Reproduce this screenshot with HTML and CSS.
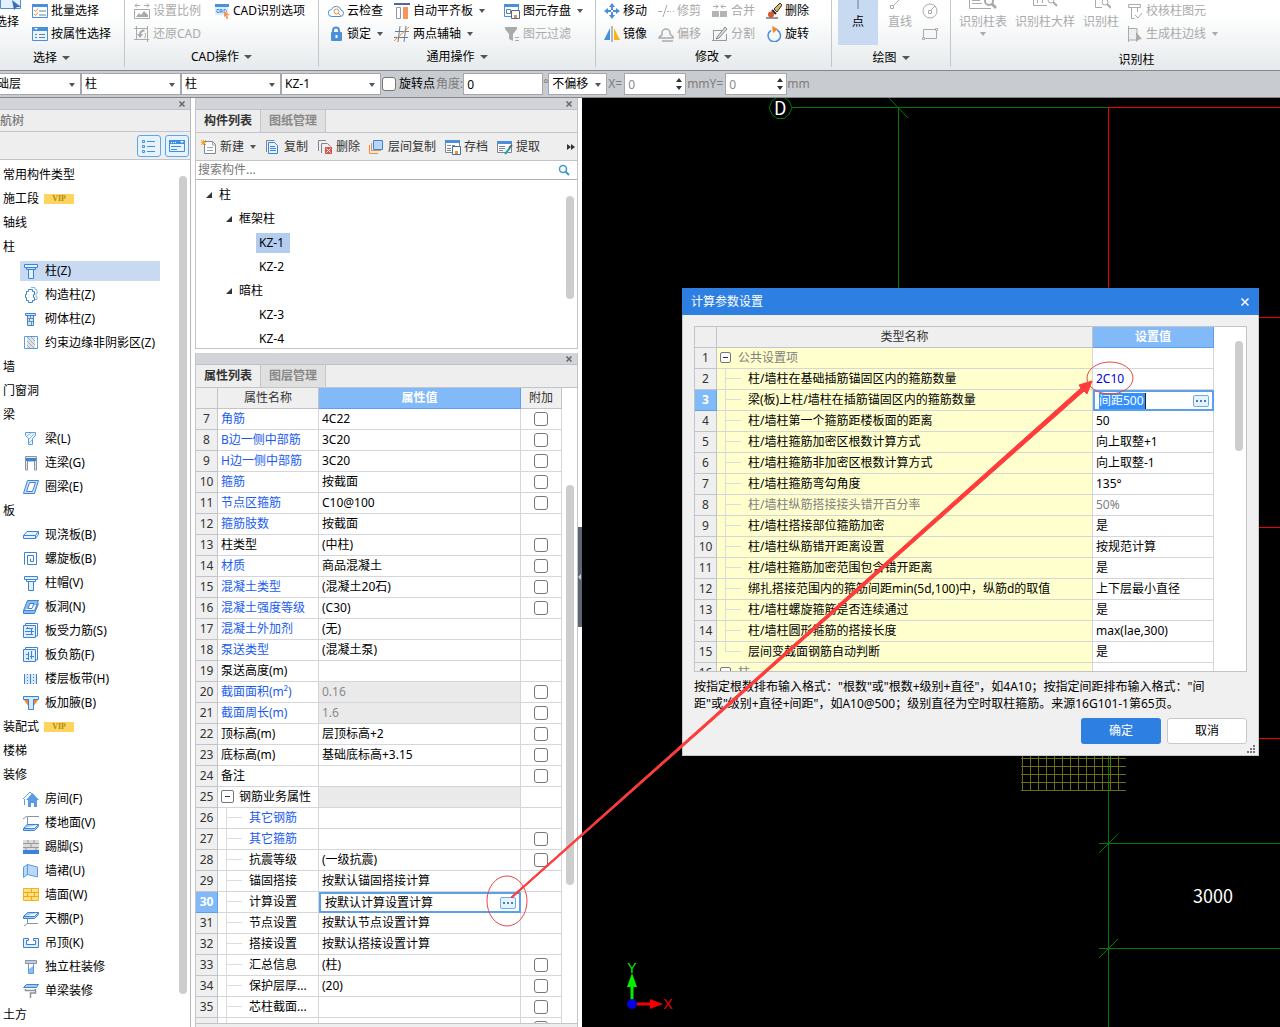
FILE: index.html
```html
<!DOCTYPE html>
<html lang="zh-CN">
<head>
<meta charset="utf-8">
<title>计算参数设置</title>
<link rel="stylesheet" href="styles.css">
</head>
<body>
<svg class="defs" width="0" height="0" aria-hidden="true">
  <defs>
    <symbol id="i-batch" viewBox="0 0 16 16"><path d="M.5 1.500h15v13H.5z" fill="#fff" stroke="#4a8fdc"/><path d="M0 1h16v3H0z" fill="#4a8fdc"/><path d="M2 7l1.500 1.500L6 5.500M2 11l1.500 1.500L6 9.500" fill="none" stroke="#f08a3c"/><path d="M7 8h7M7 12h7" stroke="#667f93"/></symbol>
    <symbol id="i-prop" viewBox="0 0 16 16"><path d="M.5 1.500h15v13H.5z" fill="#eaf4ff" stroke="#4a8fdc"/><path d="M0 1h16v4H0z" fill="#4a8fdc"/><path d="M2 2h4L4 4z" fill="#fff"/><path d="M3 8.500h2m2 0h6M3 11.500h2m2 0h6" stroke="#667f93"/></symbol>
    <symbol id="i-scale" viewBox="0 0 16 16"><path d="M1 2.500h5M10 2.500h5M3 .5l-2 2 2 2M13 .5l2 2-2 2" fill="none" stroke="#aaa"/><path d="M.5 6.500h15v9H.5z" fill="none" stroke="#aaa"/><path d="M2 14l3-4 2 2 3-4 4 4v2z" fill="#aaa"/></symbol>
    <symbol id="i-restore" viewBox="0 0 16 16"><path d="M2.500 0v13.500H15M0 2.500h13.500V16M0 13.500h3M13.500 0v3" fill="none" stroke="#aaa"/><path d="M10.500 4.500C7 4.500 6 7 6 9" fill="none" stroke="#aaa" stroke-width="2"/><path d="M3 8h6l-3 4z" fill="#aaa"/><path d="M10 12c2-1 2-3 1-5" fill="none" stroke="#aaa"/></symbol>
    <symbol id="i-cad" viewBox="0 0 16 16"><path d="M1 3h13v9H1z" fill="#dcecff"/><path d="M1 1h14v3H1z" fill="#4a8fdc"/><path d="M5 6.500H3v3h2M6 10V6.500h2V10M6 8.500h2M10 6.500h1.500l1 1v1l-1 1H10z" fill="none" stroke="#4a8fdc"/><path d="M10 8l6 4-3 .5 1.500 3-2 .5-1-3-1.500 1z" fill="#f5945f"/></symbol>
    <symbol id="i-cloud" viewBox="0 0 16 16"><path d="M4 13.500a3.500 3.500 0 0 1-.5-7A5 5 0 0 1 13 7a3.300 3.300 0 0 1-.5 6.500z" fill="#fff" stroke="#4a8fdc"/><circle cx="8.500" cy="8.500" r="2.500" fill="none" stroke="#f08a3c"/><path d="M10 10l3 3" stroke="#f08a3c"/></symbol>
    <symbol id="i-lock" viewBox="0 0 16 16"><path d="M5 7V4.500a3 3 0 0 1 6 0V7" fill="none" stroke="#4a8fdc" stroke-width="2"/><rect x="3" y="6" width="11" height="9" rx="1" fill="#4a8fdc"/><path d="M8.500 9v3" stroke="#fff" stroke-width="2"/></symbol>
    <symbol id="i-align" viewBox="0 0 16 16"><path d="M0 1h16" stroke="#4a6a9c" stroke-width="2"/><path d="M2.500 4.500h4v11h-4z" fill="#fff" stroke="#8b98a6"/><path d="M9 4h5v12H9z" fill="#f5945f"/></symbol>
    <symbol id="i-axis" viewBox="0 0 16 16"><path d="M6 0L4 16M12 0l-2 16M1 5.500h14M0 11.500h14" stroke="#667f93"/><path d="M0 15L15 1" stroke="#f08a3c"/></symbol>
    <symbol id="i-save" viewBox="0 0 16 16"><path d="M.5 1.500h14v12H.5z" fill="#fff" stroke="#4a8fdc"/><path d="M0 1h15v3H0z" fill="#4a8fdc"/><path d="M2.500 6.500h4v4h-4z" fill="none" stroke="#667f93"/><path d="M7.500 7.500h8v8h-8z" fill="#fff" stroke="#4a6a9c"/><path d="M10 12h3v3h-3z" fill="#f08a3c"/></symbol>
    <symbol id="i-filter" viewBox="0 0 16 16"><path d="M1 1h12v2L9 8v7l-4-2V8L1 3z" fill="#aaa"/><path d="M11 11.500h4M11 14.500h4" stroke="#aaa"/></symbol>
    <symbol id="i-move" viewBox="0 0 16 16"><path d="M8 0l3 4H9v3H7V4H5zM8 16l-3-4h2V9h2v3h2zM0 8l4-3v2h3v2H4v2zM16 8l-4 3V9H9V7h3V5z" fill="#4a8fdc"/></symbol>
    <symbol id="i-mirror" viewBox="0 0 16 16"><path d="M6 2v12H0z" fill="#4a8fdc"/><path d="M10 2v12h6z" fill="#f8b418"/><path d="M8 0v16" stroke="#777"/></symbol>
    <symbol id="i-trim" viewBox="0 0 16 16"><path d="M0 8.500h4M5 14L9 2M9 8.500h2m1 0h1m2 0h1" stroke="#aaa"/></symbol>
    <symbol id="i-offset" viewBox="0 0 16 16"><path d="M1 12c0-3 4-1 3-5a4 4 0 0 1 8 0c0 4 4 2 3 5zM4 15h11" fill="none" stroke="#aaa" stroke-width="1.500"/></symbol>
    <symbol id="i-merge" viewBox="0 0 16 16"><path d="M0 8h7v6H0zM8 8h7v6H8z" fill="#b4b4b4"/><path d="M1 3.500h5M4 1.500l2 2-2 2M14 3.500H9M11 1.500l-2 2 2 2" fill="none" stroke="#aaa"/></symbol>
    <symbol id="i-split" viewBox="0 0 16 16"><path d="M1 4.500h9M1.500 4v10.500h13V8M0 14.500h3" fill="none" stroke="#999"/><path d="M4 13l3-1 8-9-2-2-7 9z" fill="#ddd" stroke="#888"/></symbol>
    <symbol id="i-erase" viewBox="0 0 16 16"><path d="M8 6l6-6 2 2-5 7z" fill="#e0b868" stroke="#333"/><path d="M6 7l4 4" stroke="#222" stroke-width="2"/><circle cx="5" cy="11.500" r="3" fill="#d8582c"/><path d="M0 15h12" stroke="#333"/></symbol>
    <symbol id="i-rotate" viewBox="0 0 16 16"><path d="M11 4a6.200 6.200 0 1 1-6 .3" fill="none" stroke="#4a8fdc" stroke-width="1.500"/><path d="M6 0l6 3-5 4z" fill="#f5842c"/></symbol>
    <symbol id="i-circle" viewBox="0 0 16 16"><circle cx="8" cy="8" r="7" fill="none" stroke="#aaa"/><path d="M6.500 7.500h3v3h-3zM9 7l4-4" fill="none" stroke="#aaa"/></symbol>
    <symbol id="i-rect" viewBox="0 0 16 16"><path d="M1.500 3.500h13v9h-13z" fill="none" stroke="#aaa"/><path d="M.5 11.500h2v2h-2zM13.500 2.500h2v2h-2z" fill="#fff" stroke="#aaa"/></symbol>
    <symbol id="i-check" viewBox="0 0 16 16"><path d="M1.500 1.500h12v3h-12zM4.500 4.500v11h3M10.500 4.500V9M8 12l3 3 4-5" fill="none" stroke="#aaa"/></symbol>
    <symbol id="i-edge" viewBox="0 0 16 16"><path d="M1.500 0v16M1 2.500h9V14H1" fill="#eee" stroke="#aaa"/><path d="M9 6l6 7-3 .5L9 16z" fill="#aaa"/></symbol>

    <symbol id="i-col" viewBox="0 0 16 16"><path d="M1.500 1.500h13v3h-13zM3.500 4.500h9M5.500 6.500h5v9h-5z" fill="#e4f0ff" stroke="#3a83d6"/><path d="M3.500 4v2.500h9V4" fill="none" stroke="#3a83d6"/></symbol>
    <symbol id="i-gz" viewBox="0 0 16 16"><path d="M8 .5h4v2h2v4h-1v3h1v3h-2" fill="none" stroke="#8ab8ee"/><path d="M5.500 2.500h4v2h2v3h-1v3h1v3h-2v2h-4v-2h-2v-3h-1v-3h1v-3h2z" fill="#fff" stroke="#3a83d6"/></symbol>
    <symbol id="i-qt" viewBox="0 0 16 16"><path d="M2.500 2.500h10v2h-10zM4.500 4.500h6v10h-6z" fill="#d4e6fb" stroke="#3a83d6"/><path d="M5 7.500h5M5 10.500h5M7.500 5v2M6.500 8v2M8.500 11v3" stroke="#6e8cab"/></symbol>
    <symbol id="i-ys" viewBox="0 0 16 16"><path d="M1.500 1.500h13v12h-13z" fill="#fff" stroke="#5a9be2"/><path d="M4 2h8v11H4z" fill="#dde1e4"/><path d="M4 2l8 8M4 6l7 7M8 2l4 4M4 10l3 3" stroke="#a5adb4"/></symbol>
    <symbol id="i-beam" viewBox="0 0 16 16"><path d="M2.500 1.500h10v3l-3 3v6h-4v-6l-3-3z" fill="#eef5ff" stroke="#5a9be2"/><path d="M4 5l4-3M6 8l5-5M6 12l3-3" stroke="#8ab8ee"/></symbol>
    <symbol id="i-lbeam" viewBox="0 0 16 16"><path d="M2.500 15V1.500h11V15h-2V6h-7v9z" fill="#e4e8ec" stroke="#8894a0"/><path d="M3 3h10v3H3z" fill="#3a83d6"/></symbol>
    <symbol id="i-ring" viewBox="0 0 16 16"><path d="M4.500 1.500h11l-4 13H.5z" fill="#cfe3fb" stroke="#3a83d6"/><path d="M6.500 3.500h6l-3 9h-6z" fill="#fff" stroke="#3a83d6"/></symbol>
    <symbol id="i-slab" viewBox="0 0 16 16"><path d="M4 4.500h11.500l-3 4H.5zM.5 8.500v3h12v-3M12.500 11.500l3-4v-3" fill="#e4f0ff" stroke="#3a83d6"/></symbol>
    <symbol id="i-spiral" viewBox="0 0 16 16"><path d="M1.500 13.500V1.500h12v12H4.500v-9h6v6h-3v-3" fill="none" stroke="#3a83d6"/></symbol>
    <symbol id="i-hole" viewBox="0 0 16 16"><path d="M4.500 1.500h11l-4 10H.5zM.5 11.500v3h11l4-10" fill="#8ebcf2" stroke="#3a83d6"/><path d="M7 4.500h4l-2 5H5z" fill="#fff" stroke="#3a83d6"/></symbol>
    <symbol id="i-rebar" viewBox="0 0 16 16"><path d="M2.500 2V.5h12V13H13" fill="none" stroke="#3a83d6"/><path d="M.5 2.500h12v12H.5z" fill="#e0edfc" stroke="#3a83d6"/><path d="M3 5.500h7M3 11.500h7M4.500 4v2M8.500 6v6M2 8.500h9" stroke="#3a83d6"/></symbol>
    <symbol id="i-rebar2" viewBox="0 0 16 16"><path d="M2.500 2V.5h12V13H13" fill="none" stroke="#3a83d6"/><path d="M.5 2.500h12v12H.5z" fill="#e0edfc" stroke="#3a83d6"/><path d="M5.500 5v8M8.500 4v8M3 7.500h3M7 9.500h4M3 11.500h2" stroke="#3a83d6"/></symbol>
    <symbol id="i-band" viewBox="0 0 16 16"><path d="M1 3h13v10H1z" fill="#d8e9fc"/><path d="M1.500 3v10M7.500 3v10M13.500 3v10" stroke="#3a83d6"/><path d="M4.500 3v10M10.500 3v10" stroke="#3a83d6" stroke-dasharray="1 2"/></symbol>
    <symbol id="i-haunch" viewBox="0 0 16 16"><path d="M1 5l5 7V5zM15 5l-5 7V5z" fill="#f5842c"/><path d="M.5 1.500h15v3h-5v10h-5v-10h-5z" fill="#d8e9fc" stroke="#3a83d6"/></symbol>
    <symbol id="i-house" viewBox="0 0 16 16"><path d="M0 8l7-7 2 2M1.500 8v6" fill="none" stroke="#5a9be2"/><path d="M9.500 2L16 9h-2v7h-3v-4H8v4H5V9H3z" fill="#5a9be2"/></symbol>
    <symbol id="i-floor" viewBox="0 0 16 16"><path d="M4.500 9V1.500H16M4 1L0 4" fill="none" stroke="#8894a0"/><path d="M4 9.500h11.500l-4 4H.5zM.5 13.500v2h11l4-4v-2" fill="#a4cbf6" stroke="#3a83d6"/></symbol>
    <symbol id="i-skirt" viewBox="0 0 16 16"><path d="M0 1h16v10H0z" fill="#dcdcdc"/><path d="M0 4.500h16M0 8.500h16M5 1v3M11 1v3M8 5v3M3 9v2M13 9v2" stroke="#999"/><path d="M0 11h16v4H0z" fill="#3a83d6"/></symbol>
    <symbol id="i-wains" viewBox="0 0 16 16"><path d="M4.500 1.500v10l-4 3V4zM4.500 1.500l10 2.500v10l-10-2.500z" fill="#bcd8f8" stroke="#5a9be2"/></symbol>
    <symbol id="i-wall" viewBox="0 0 16 16"><path d="M.5 1.500h15v12H.5z" fill="#ffe08a" stroke="#f5b31a"/><path d="M1 5.500h14M1 9.500h14M8.500 2v3M4.500 6v3M11.500 6v3M8.500 10v3" stroke="#f5a80a"/></symbol>
    <symbol id="i-ceil" viewBox="0 0 16 16"><path d="M4.500 1.500h11l-4 4H.5zM.5 5.500v2h11l4-4v-2" fill="#a4cbf6" stroke="#3a83d6"/><path d="M4.500 8v5M5 12.500h10M5 12l-4 3" stroke="#8894a0"/></symbol>
    <symbol id="i-susp" viewBox="0 0 16 16"><path d="M.5 3.500h5v2h-2v4h9v-4h-2v-2h5v9H.5z" fill="#e0edfc" stroke="#3a83d6"/></symbol>
    <symbol id="i-dcol" viewBox="0 0 16 16"><path d="M2.500 1.500h11v3h-11z" fill="#c8ccd0" stroke="#8894a0"/><path d="M5.500 4.500h5v10h-5z" fill="#fff" stroke="#5a9be2"/><path d="M6 10l4-3v7H6z" fill="#8ebcf2"/></symbol>
    <symbol id="i-dbeam" viewBox="0 0 16 16"><path d="M3.500 1.500h12l-2 3H.5z" fill="#a4cbf6" stroke="#3a83d6"/><path d="M2.500 6v1.500h10V6M12.500 8v2H7.500v5" fill="none" stroke="#8894a0" stroke-width="1.500"/></symbol>

    <symbol id="i-new" viewBox="0 0 16 16"><path d="M3.500 2.500h8l3 3v9h-11z" fill="#fff" stroke="#7b8894"/><path d="M11.500 2v4H15M6 8.500h6M6 11.500h6" fill="none" stroke="#9aa5af"/><path d="M0 1l5 5M5 1L0 6M2.500 1v5M0 3.500h5" stroke="#f5a52c"/></symbol>
    <symbol id="i-copy" viewBox="0 0 16 16"><path d="M1.500 13V1.500h8" fill="none" stroke="#7b8894"/><path d="M3.500 3.500h6l3 3v8h-9z" fill="#e8f2ff" stroke="#3a83d6"/><path d="M5 7.500h5M5 9.500h6M5 11.500h6" stroke="#3a83d6"/></symbol>
    <symbol id="i-del" viewBox="0 0 16 16"><path d="M1.500 12V1.500H9M4.500 14V4.500h6l3 3" fill="none" stroke="#7b8894"/><path d="M8 8h7v7H8z" fill="#d9534f"/><path d="M9.500 9.500l4 4M13.500 9.500l-4 4" stroke="#fff"/></symbol>
    <symbol id="i-layer" viewBox="0 0 16 16"><path d="M.5 6v8.500H9M2.500 4v7.500H12" fill="none" stroke="#f08a3c"/><path d="M4.500 1.500h9v9h-9z" fill="#b9d6f9" stroke="#3a83d6"/></symbol>
    <symbol id="i-arch" viewBox="0 0 16 16"><path d="M.5 1.500h14v12H.5z" fill="#fff" stroke="#7b8894"/><path d="M0 1h15v3H0z" fill="#4a8fdc"/><path d="M2 6.500h4m1 0h3M2 9.500h4M2 11.500h4" stroke="#7b8894"/><path d="M7.500 7.500h8v8h-8z" fill="#fff" stroke="#4a6a9c"/><path d="M10 12h3v3h-3z" fill="#f08a3c"/></symbol>
    <symbol id="i-pick" viewBox="0 0 16 16"><path d="M.5 2.500h14v11H.5z" fill="#fff" stroke="#7b8894"/><path d="M0 2h15v3H0z" fill="#4a8fdc"/><path d="M2 7.500h6M2 9.500h6M2 11.500h4" stroke="#7b8894"/><path d="M8 15l5-6" stroke="#23a3a8" stroke-width="2"/><path d="M12 9l3-3" stroke="#666" stroke-width="2"/></symbol>
    <symbol id="i-search" viewBox="0 0 12 12"><circle cx="5" cy="5" r="3.500" fill="none" stroke="#3a9cc8" stroke-width="1.500"/><path d="M7.500 7.500L11 11" stroke="#3a9cc8" stroke-width="2"/></symbol>
    <symbol id="i-close" viewBox="0 0 8 8"><path d="M1.500 1.500l5 5M6.500 1.500l-5 5" stroke="currentColor" stroke-width="1.500"/></symbol>
    <symbol id="i-closew" viewBox="0 0 8 8"><path d="M.5 .5l7 7M7.500 .5l-7 7" stroke="currentColor" stroke-width="1.500"/></symbol>
    <symbol id="i-tri" viewBox="0 0 8 8"><path d="M7 1v6H1z" fill="#333"/></symbol>
  </defs>
</svg>

<header class="ribbon">
  <section class="group g-select">
    <div class="tools">
      <button class="big"><svg width="32" height="12"><path d="M9.500 0v8.500h20V0" fill="#e4f0ff" stroke="#4a8fdc"/><path d="M21 0l9 7h-4l-3 3z" fill="#3a6fb8"/></svg>选择</button>
      <div class="pair">
        <button class="tool"><svg class="ic"><use href="#i-batch"/></svg>批量选择</button>
        <button class="tool"><svg class="ic"><use href="#i-prop"/></svg>按属性选择</button>
      </div>
    </div>
    <button class="caption">选择<i class="caret"></i></button>
  </section>
  <section class="group g-cad">
    <div class="tools">
      <button class="tool" disabled><svg class="ic"><use href="#i-scale"/></svg>设置比例</button>
      <button class="tool"><svg class="ic"><use href="#i-cad"/></svg>CAD识别选项</button>
      <button class="tool" disabled><svg class="ic"><use href="#i-restore"/></svg>还原CAD</button>
    </div>
    <button class="caption">CAD操作<i class="caret"></i></button>
  </section>
  <section class="group g-common">
    <div class="tools">
      <button class="tool"><svg class="ic"><use href="#i-cloud"/></svg>云检查</button>
      <button class="tool"><svg class="ic"><use href="#i-align"/></svg>自动平齐板<i class="caret"></i></button>
      <button class="tool"><svg class="ic"><use href="#i-save"/></svg>图元存盘<i class="caret"></i></button>
      <button class="tool"><svg class="ic"><use href="#i-lock"/></svg>锁定<i class="caret"></i></button>
      <button class="tool"><svg class="ic"><use href="#i-axis"/></svg>两点辅轴<i class="caret"></i></button>
      <button class="tool" disabled><svg class="ic"><use href="#i-filter"/></svg>图元过滤</button>
    </div>
    <button class="caption">通用操作<i class="caret"></i></button>
  </section>
  <section class="group g-modify">
    <div class="tools">
      <button class="tool"><svg class="ic"><use href="#i-move"/></svg>移动</button>
      <button class="tool" disabled><svg class="ic"><use href="#i-trim"/></svg>修剪</button>
      <button class="tool" disabled><svg class="ic"><use href="#i-merge"/></svg>合并</button>
      <button class="tool"><svg class="ic"><use href="#i-erase"/></svg>删除</button>
      <button class="tool"><svg class="ic"><use href="#i-mirror"/></svg>镜像</button>
      <button class="tool" disabled><svg class="ic"><use href="#i-offset"/></svg>偏移</button>
      <button class="tool" disabled><svg class="ic"><use href="#i-split"/></svg>分割</button>
      <button class="tool"><svg class="ic"><use href="#i-rotate"/></svg>旋转</button>
    </div>
    <button class="caption">修改<i class="caret"></i></button>
  </section>
  <section class="group g-draw">
    <div class="tools">
      <button class="big on"><svg width="20" height="12"><path d="M10 0v9" stroke="#667f93"/></svg>点</button>
      <button class="big" disabled><svg width="20" height="12"><path d="M.5 5.500h3v3h-3zM4 5l6-6" fill="none" stroke="#aaa"/></svg>直线</button>
      <div class="pair">
        <button class="tool" disabled aria-label="圆"><svg class="ic"><use href="#i-circle"/></svg></button>
        <button class="tool" disabled aria-label="矩形"><svg class="ic"><use href="#i-rect"/></svg></button>
      </div>
    </div>
    <button class="caption">绘图<i class="caret"></i></button>
  </section>
  <section class="group g-ident">
    <div class="tools">
      <button class="big" disabled><svg width="28" height="12"><path d="M.5 0v8.500H22M3 3.500h10M3 .5h8" fill="none" stroke="#aaa"/><circle cx="20" cy="1" r="4" fill="none" stroke="#aaa" stroke-width="2"/><path d="M23 4l4 4" stroke="#aaa" stroke-width="3"/></svg>识别柱表<i class="caret"></i></button>
      <button class="big" disabled><svg width="28" height="12"><path d="M2.500 0v5.500H16M6.500 0v3M11.500 0v3" fill="none" stroke="#aaa"/><circle cx="20" cy="0" r="3" fill="none" stroke="#aaa"/><path d="M22 2l4 4" stroke="#aaa" stroke-width="2"/></svg>识别柱大样</button>
      <button class="big" disabled><svg width="20" height="12"><path d="M4.500 0v7.500H11" fill="none" stroke="#aaa"/><circle cx="14" cy="2" r="3" fill="none" stroke="#aaa"/><path d="M16 4l4 4" stroke="#aaa" stroke-width="2"/></svg>识别柱</button>
      <div class="pair">
        <button class="tool" disabled><svg class="ic"><use href="#i-check"/></svg>校核柱图元</button>
        <button class="tool" disabled><svg class="ic"><use href="#i-edge"/></svg>生成柱边线<i class="caret"></i></button>
      </div>
    </div>
    <button class="caption">识别柱</button>
  </section>
</header>

<form class="options">
  <span class="combo floor"><select aria-label="楼层"><option>基础层</option></select></span>
  <span class="combo"><select aria-label="构件大类"><option>柱</option></select></span>
  <span class="combo"><select aria-label="构件类型"><option>柱</option></select></span>
  <span class="combo"><select aria-label="构件"><option>KZ-1</option></select></span>
  <label class="rotate"><input type="checkbox" class="box">旋转点</label>
  <label class="dim" for="angle">角度:</label>
  <input id="angle" class="field" type="text" value="0"><span class="dim deg">°</span>
  <span class="combo narrow"><select aria-label="偏移方式"><option>不偏移</option></select></span>
  <label class="dim axis" for="offx">X=</label><span class="spin"><input id="offx" class="field" type="text" value="0" disabled></span>
  <label class="dim axis" for="offy">mmY=</label><span class="spin"><input id="offy" class="field" type="text" value="0" disabled></span><span class="dim">mm</span>
</form>

<main class="work">
  <aside class="nav">
    <div class="strip"><button class="x" aria-label="关闭"><svg width="8" height="8"><use href="#i-close"/></svg></button></div>
    <h2 class="nav-title">导航树</h2>
    <div class="nav-tools">
      <button aria-label="列表"><svg width="14" height="14"><path d="M.5 1.500h2v2h-2zM.5 6.500h2v2h-2zM.5 11.500h2v2h-2zM5 2.500h8M5 7.500h8M5 12.500h8" fill="none" stroke="#3f8fe0"/></svg></button>
      <button aria-label="面板"><svg width="16" height="14"><path d="M.5 1.500h15v11H.5z" fill="#e6f3ff" stroke="#3f8fe0"/><path d="M0 1h16v4H0z" fill="#3f8fe0"/><path d="M2 3.500h1m1 0h1m1 0h1" stroke="#fff"/><path d="M11 2h4l-2 2z" fill="#fff"/><path d="M2 7.500h10M2 10.500h6" stroke="#3f8fe0"/></svg></button>
    </div>
    <div class="scroller">
      <ul class="nav-list">
        <li>常用构件类型</li>
        <li>施工段<b class="vip">VIP</b></li>
        <li>轴线</li>
        <li>柱</li>
        <li class="sub sel"><svg class="ic"><use href="#i-col"/></svg>柱(Z)</li>
        <li class="sub"><svg class="ic"><use href="#i-gz"/></svg>构造柱(Z)</li>
        <li class="sub"><svg class="ic"><use href="#i-qt"/></svg>砌体柱(Z)</li>
        <li class="sub"><svg class="ic"><use href="#i-ys"/></svg>约束边缘非阴影区(Z)</li>
        <li>墙</li>
        <li>门窗洞</li>
        <li>梁</li>
        <li class="sub"><svg class="ic"><use href="#i-beam"/></svg>梁(L)</li>
        <li class="sub"><svg class="ic"><use href="#i-lbeam"/></svg>连梁(G)</li>
        <li class="sub"><svg class="ic"><use href="#i-ring"/></svg>圈梁(E)</li>
        <li>板</li>
        <li class="sub"><svg class="ic"><use href="#i-slab"/></svg>现浇板(B)</li>
        <li class="sub"><svg class="ic"><use href="#i-spiral"/></svg>螺旋板(B)</li>
        <li class="sub"><svg class="ic"><use href="#i-col"/></svg>柱帽(V)</li>
        <li class="sub"><svg class="ic"><use href="#i-hole"/></svg>板洞(N)</li>
        <li class="sub"><svg class="ic"><use href="#i-rebar"/></svg>板受力筋(S)</li>
        <li class="sub"><svg class="ic"><use href="#i-rebar2"/></svg>板负筋(F)</li>
        <li class="sub"><svg class="ic"><use href="#i-band"/></svg>楼层板带(H)</li>
        <li class="sub"><svg class="ic"><use href="#i-haunch"/></svg>板加腋(B)</li>
        <li>装配式<b class="vip">VIP</b></li>
        <li>楼梯</li>
        <li>装修</li>
        <li class="sub"><svg class="ic"><use href="#i-house"/></svg>房间(F)</li>
        <li class="sub"><svg class="ic"><use href="#i-floor"/></svg>楼地面(V)</li>
        <li class="sub"><svg class="ic"><use href="#i-skirt"/></svg>踢脚(S)</li>
        <li class="sub"><svg class="ic"><use href="#i-wains"/></svg>墙裙(U)</li>
        <li class="sub"><svg class="ic"><use href="#i-wall"/></svg>墙面(W)</li>
        <li class="sub"><svg class="ic"><use href="#i-ceil"/></svg>天棚(P)</li>
        <li class="sub"><svg class="ic"><use href="#i-susp"/></svg>吊顶(K)</li>
        <li class="sub"><svg class="ic"><use href="#i-dcol"/></svg>独立柱装修</li>
        <li class="sub"><svg class="ic"><use href="#i-dbeam"/></svg>单梁装修</li>
        <li>土方</li>
      </ul>
      <div class="track nav-track"><div class="thumb"></div></div>
    </div>
  </aside>

  <div class="middle">
    <section class="panel comps">
      <div class="strip"><button class="x" aria-label="关闭"><svg width="8" height="8"><use href="#i-close"/></svg></button></div>
      <div class="tabs"><button class="tab on">构件列表</button><button class="tab">图纸管理</button></div>
      <div class="bar">
        <button class="tool"><svg class="ic"><use href="#i-new"/></svg>新建<i class="caret"></i></button>
        <button class="tool"><svg class="ic"><use href="#i-copy"/></svg>复制</button>
        <button class="tool"><svg class="ic"><use href="#i-del"/></svg>删除</button>
        <button class="tool"><svg class="ic"><use href="#i-layer"/></svg>层间复制</button>
        <button class="tool"><svg class="ic"><use href="#i-arch"/></svg>存档</button>
        <button class="tool"><svg class="ic"><use href="#i-pick"/></svg>提取</button>
        <button class="more" aria-label="更多"><svg width="8" height="8"><path d="M0 1l4 3-4 3zM4 1l4 3-4 3z" fill="#333"/></svg></button>
      </div>
      <div class="search"><input type="text" placeholder="搜索构件..." aria-label="搜索构件"><svg width="12" height="12"><use href="#i-search"/></svg></div>
      <div class="scroller tree-box">
        <ul class="tree">
          <li><svg width="8" height="8"><use href="#i-tri"/></svg>柱</li>
          <li class="l2"><svg width="8" height="8"><use href="#i-tri"/></svg>框架柱</li>
          <li class="l3"><span class="sel">KZ-1</span></li>
          <li class="l3"><span>KZ-2</span></li>
          <li class="l2"><svg width="8" height="8"><use href="#i-tri"/></svg>暗柱</li>
          <li class="l3"><span>KZ-3</span></li>
          <li class="l3"><span>KZ-4</span></li>
        </ul>
        <div class="track tree-track"><div class="thumb"></div></div>
      </div>
    </section>

    <section class="panel props">
      <div class="strip"><button class="x" aria-label="关闭"><svg width="8" height="8"><use href="#i-close"/></svg></button></div>
      <div class="tabs"><button class="tab on">属性列表</button><button class="tab">图层管理</button></div>
      <div class="scroller grid-box">
        <table class="grid">
          <colgroup><col class="c-num"><col class="c-name"><col class="c-val"><col class="c-add"></colgroup>
          <thead><tr><th></th><th>属性名称</th><th class="hot">属性值</th><th>附加</th></tr></thead>
          <tbody>
            <tr><th>7</th><td class="blue">角筋</td><td>4C22</td><td><input type="checkbox" class="box" aria-label="附加 7"></td></tr>
            <tr><th>8</th><td class="blue">B边一侧中部筋</td><td>3C20</td><td><input type="checkbox" class="box" aria-label="附加 8"></td></tr>
            <tr><th>9</th><td class="blue">H边一侧中部筋</td><td>3C20</td><td><input type="checkbox" class="box" aria-label="附加 9"></td></tr>
            <tr><th>10</th><td class="blue">箍筋</td><td>按截面</td><td><input type="checkbox" class="box" aria-label="附加 10"></td></tr>
            <tr><th>11</th><td class="blue">节点区箍筋</td><td>C10@100</td><td><input type="checkbox" class="box" aria-label="附加 11"></td></tr>
            <tr><th>12</th><td class="blue">箍筋肢数</td><td>按截面</td><td></td></tr>
            <tr><th>13</th><td>柱类型</td><td>(中柱)</td><td><input type="checkbox" class="box" aria-label="附加 13"></td></tr>
            <tr><th>14</th><td class="blue">材质</td><td>商品混凝土</td><td><input type="checkbox" class="box" aria-label="附加 14"></td></tr>
            <tr><th>15</th><td class="blue">混凝土类型</td><td>(混凝土20石)</td><td><input type="checkbox" class="box" aria-label="附加 15"></td></tr>
            <tr><th>16</th><td class="blue">混凝土强度等级</td><td>(C30)</td><td><input type="checkbox" class="box" aria-label="附加 16"></td></tr>
            <tr><th>17</th><td class="blue">混凝土外加剂</td><td>(无)</td><td></td></tr>
            <tr><th>18</th><td class="blue">泵送类型</td><td>(混凝土泵)</td><td></td></tr>
            <tr><th>19</th><td>泵送高度(m)</td><td></td><td></td></tr>
            <tr><th>20</th><td class="blue">截面面积(m²)</td><td class="off">0.16</td><td><input type="checkbox" class="box" aria-label="附加 20"></td></tr>
            <tr><th>21</th><td class="blue">截面周长(m)</td><td class="off">1.6</td><td><input type="checkbox" class="box" aria-label="附加 21"></td></tr>
            <tr><th>22</th><td>顶标高(m)</td><td>层顶标高+2</td><td><input type="checkbox" class="box" aria-label="附加 22"></td></tr>
            <tr><th>23</th><td>底标高(m)</td><td>基础底标高+3.15</td><td><input type="checkbox" class="box" aria-label="附加 23"></td></tr>
            <tr><th>24</th><td>备注</td><td></td><td><input type="checkbox" class="box" aria-label="附加 24"></td></tr>
            <tr><th>25</th><td class="parent"><button class="fold" aria-label="折叠"></button>钢筋业务属性</td><td class="off"></td><td></td></tr>
            <tr><th>26</th><td class="child blue">其它钢筋</td><td></td><td></td></tr>
            <tr><th>27</th><td class="child blue">其它箍筋</td><td></td><td><input type="checkbox" class="box" aria-label="附加 27"></td></tr>
            <tr><th>28</th><td class="child">抗震等级</td><td>(一级抗震)</td><td><input type="checkbox" class="box" aria-label="附加 28"></td></tr>
            <tr><th>29</th><td class="child">锚固搭接</td><td>按默认锚固搭接计算</td><td></td></tr>
            <tr><th class="hot">30</th><td class="child">计算设置</td><td class="edit"><div>按默认计算设置计算<button class="dots" aria-label="更多设置"><i></i></button></div></td><td></td></tr>
            <tr><th>31</th><td class="child">节点设置</td><td>按默认节点设置计算</td><td></td></tr>
            <tr><th>32</th><td class="child">搭接设置</td><td>按默认搭接设置计算</td><td></td></tr>
            <tr><th>33</th><td class="child">汇总信息</td><td>(柱)</td><td><input type="checkbox" class="box" aria-label="附加 33"></td></tr>
            <tr><th>34</th><td class="child">保护层厚...</td><td>(20)</td><td><input type="checkbox" class="box" aria-label="附加 34"></td></tr>
            <tr><th>35</th><td class="child">芯柱截面...</td><td></td><td><input type="checkbox" class="box" aria-label="附加 35"></td></tr>
            <tr><th></th><td class="child"></td><td></td><td><input type="checkbox" class="box" aria-label="附加 36"></td></tr>
          </tbody>
        </table>
        <div class="track grid-track"><div class="thumb"></div></div>
      </div>
    </section>
    <button class="splitter" aria-label="收起面板"></button>
  </div>

  <section class="canvas">
    <svg class="drawing" width="100%" height="100%">
      <g transform="translate(-582 -98)" fill="none">
        <g stroke="#007a00">
          <path d="M777 97.500h7l5 3.500 3 6.500-3 7-5 4h-7l-5-4-3-7 3-6.500z"/>
          <path d="M792 107.500h316M898.500 108v190M888 97l20 21M1108.500 750v290M1108 843.500h1200M1108 948.500h1200M1099 853l19-19M1099 958l19-19M1099 843.500h10M1099 948.500h10"/>
        </g>
        <path d="M1108 107.500h1200M1108.500 108v190M1240 317.500h1000M1240 527.500h1000M1240 738.500h1000" stroke="#f00000"/>
        <path d="M1021 758.500h105M1021 766.500h105M1021 774.500h105M1021 782.500h105M1021 790.500h105M1022.500 750v41M1030.500 750v41M1038.500 750v41M1046.500 750v41M1054.500 750v41M1062.500 750v41M1070.500 750v41M1078.500 750v41M1086.500 750v41M1094.500 750v41M1102.500 750v41M1110.500 750v41M1118.500 750v41" stroke="#6c6c10"/>
        <path d="M632 1003V982" stroke="#00f000" stroke-width="3"/><path d="M627 987l5-14 5 14z" fill="#00f000"/>
        <path d="M633 1004h20" stroke="#f00000" stroke-width="3"/><path d="M650 999l13 5-13 5z" fill="#f00000"/>
        <circle cx="632" cy="1004" r="5" fill="#0000e0"/>
        <text class="axis-name y" x="632" y="973">Y</text>
        <text class="axis-name x" x="668" y="1009">X</text>
        <text class="cad" x="774" y="115">D</text>
        <text class="cad" x="1193" y="903">3000</text>
      </g>
    </svg>

    <div class="dialog" role="dialog" aria-labelledby="dlg-title">
      <div class="dlg-head"><h1 id="dlg-title">计算参数设置</h1><button class="x" aria-label="关闭"><svg width="8" height="8"><use href="#i-closew"/></svg></button></div>
      <div class="dlg-body">
        <div class="scroller dlg-box">
          <table class="grid">
            <colgroup><col class="d-num"><col class="d-name"><col class="d-val"></colgroup>
            <thead><tr><th></th><th>类型名称</th><th class="hot">设置值</th></tr></thead>
            <tbody>
              <tr><th>1</th><td class="parent gray"><button class="fold" aria-label="折叠"></button>公共设置项</td><td></td></tr>
              <tr><th>2</th><td class="child">柱/墙柱在基础插筋锚固区内的箍筋数量</td><td class="deep">2C10</td></tr>
              <tr><th class="hot">3</th><td class="child">梁(板)上柱/墙柱在插筋锚固区内的箍筋数量</td><td class="edit"><div><input class="picked" type="text" value="间距500" aria-label="设置值"><button class="dots" aria-label="更多设置"><i></i></button></div></td></tr>
              <tr><th>4</th><td class="child">柱/墙柱第一个箍筋距楼板面的距离</td><td>50</td></tr>
              <tr><th>5</th><td class="child">柱/墙柱箍筋加密区根数计算方式</td><td>向上取整+1</td></tr>
              <tr><th>6</th><td class="child">柱/墙柱箍筋非加密区根数计算方式</td><td>向上取整-1</td></tr>
              <tr><th>7</th><td class="child">柱/墙柱箍筋弯勾角度</td><td>135°</td></tr>
              <tr><th>8</th><td class="child gray">柱/墙柱纵筋搭接接头错开百分率</td><td class="gray">50%</td></tr>
              <tr><th>9</th><td class="child">柱/墙柱搭接部位箍筋加密</td><td>是</td></tr>
              <tr><th>10</th><td class="child">柱/墙柱纵筋错开距离设置</td><td>按规范计算</td></tr>
              <tr><th>11</th><td class="child">柱/墙柱箍筋加密范围包含错开距离</td><td>是</td></tr>
              <tr><th>12</th><td class="child">绑扎搭接范围内的箍筋间距min(5d,100)中，纵筋d的取值</td><td>上下层最小直径</td></tr>
              <tr><th>13</th><td class="child">柱/墙柱螺旋箍筋是否连续通过</td><td>是</td></tr>
              <tr><th>14</th><td class="child">柱/墙柱圆形箍筋的搭接长度</td><td>max(lae,300)</td></tr>
              <tr><th>15</th><td class="child last">层间变截面钢筋自动判断</td><td>是</td></tr>
              <tr><th>16</th><td class="parent gray"><button class="fold" aria-label="折叠"></button>柱</td><td></td></tr>
            </tbody>
          </table>
          <div class="track dlg-track"><div class="thumb"></div></div>
        </div>
        <p class="hint">按指定根数排布输入格式："根数"或"根数+级别+直径"，如4A10；按指定间距排布输入格式："间距"或"级别+直径+间距"，如A10@500；级别直径为空时取柱箍筋。来源16G101-1第65页。</p>
        <div class="actions"><button class="ok">确定</button><button class="cancel">取消</button></div>
      </div>
      <svg class="grip" width="8" height="8"><path d="M6 0h2v2H6zM3 3h2v2H3zM6 3h2v2H6zM0 6h2v2H0zM3 6h2v2H3zM6 6h2v2H6z" fill="#777"/></svg>
    </div>
  </section>
</main>

<svg class="marks" width="100%" height="100%" aria-hidden="true">
  <ellipse cx="507" cy="901" rx="20" ry="25" fill="none" stroke="#e8484c"/>
  <ellipse cx="1110" cy="378" rx="23" ry="16" fill="none" stroke="#e8484c"/>
  <path d="M511 897L1081 388l-2-3 13-4-5 13-3-3L512 898z" fill="#ff3b3b" stroke="#ff3b3b"/>
</svg>
</body>
</html>
```
FILE: styles.css
```css
* { box-sizing: border-box; }
body {
  margin: 0;
  height: 100vh;
  display: flex;
  flex-direction: column;
  overflow: hidden;
  position: relative;
  background: #fff;
  color: #000;
  font: 12px/20px "Noto Sans", "Noto Sans CJK SC", sans-serif;
}
button, input, select { font: inherit; color: inherit; margin: 0; padding: 0; border: 0; background: none; border-radius: 0; }
ul, h1, h2, p { margin: 0; padding: 0; list-style: none; font-size: 12px; }
svg { flex: none; display: block; }
.defs { position: absolute; }
.ic { width: 16px; height: 16px; }
.caret { width: 0; height: 0; border: 3px solid transparent; border-top: 4px solid #555; border-bottom: 0; margin-left: 3px; }

/* ribbon */
.ribbon {
  flex: none;
  display: flex;
  height: 71px;
  overflow: hidden;
  background: linear-gradient(#fff 20%, #e6eaec);
  border-bottom: 1px solid #85878d;
}
.group { flex: none; position: relative; display: flex; flex-direction: column; border-right: 1px solid #c3c6ca; height: 67px; }
.tools { height: 45px; display: grid; grid-auto-rows: 21px; row-gap: 2px; align-content: start; }
.tool { display: flex; align-items: center; gap: 3px; height: 21px; white-space: nowrap; text-align: left; }
.tool:disabled, .big:disabled { color: #aaa; }
:disabled > .caret { border-top-color: #aaa; }
.caption { display: flex; align-items: center; justify-content: center; gap: 2px; height: 20px; margin-top: 3px; }
.caption .caret { border-width: 4px; border-bottom: 0; }
.big { display: flex; flex-direction: column; align-items: center; height: 45px; white-space: nowrap; }
.big .caret { margin: 0; }
.big.on { background: #c8daf2; width: 40px; }
.pair { display: grid; grid-auto-rows: 21px; row-gap: 2px; align-content: start; }
.g-select { width: 146px; margin-left: -21px; }
.g-select .tools { display: flex; gap: 9px; padding-left: 12px; }
.g-cad { width: 194px; }
.g-cad .tools { grid-template-columns: 80px auto; padding-left: 9px; }
.g-common { width: 277px; }
.g-common .tools { grid-template-columns: 66px 110px auto; padding-left: 9px; }
.g-modify { width: 236px; }
.g-modify .tools { grid-template-columns: 54px 54px 54px auto; padding-left: 8px; }
.g-draw { width: 119px; }
.g-draw .tools { display: flex; gap: 10px; padding-left: 6px; }
.g-ident { width: 372px; }
.g-ident .tools { display: flex; gap: 8px; padding-left: 8px; }
.g-ident .caption { margin-top: 5px; }

/* option bar */
.options {
  flex: none;
  display: flex;
  align-items: center;
  height: 27px;
  background: #c8cbd0;
  border-bottom: 1px solid #85878d;
  white-space: nowrap;
}
.combo, .spin { position: relative; display: block; flex: none; }
.combo { width: 100px; }
.combo.floor { margin-left: -19px; }
.combo.narrow { width: 59px; }
.combo select { appearance: none; width: 100%; height: 22px; padding-left: 3px; background: #fff; border: 1px solid #a4a7ac; }
.combo::after { content: ""; position: absolute; right: 6px; top: 10px; border: 3px solid transparent; border-top: 4px solid #555; border-bottom: 0; }
.field { width: 80px; height: 22px; padding: 0 3px; background: #fff; border: 1px solid #a4a7ac; }
.field:disabled { color: #8a8a8a; }
.spin .field { width: 62px; }
.spin::before, .spin::after { content: ""; position: absolute; right: 4px; border: 3px solid transparent; }
.spin::before { top: 5px; border-bottom: 4px solid #333; border-top: 0; }
.spin::after { bottom: 5px; border-top: 4px solid #333; border-bottom: 0; }
.rotate { display: flex; align-items: center; gap: 3px; margin: 0 1px; }
.dim { color: #7d7d7d; }
.dim.axis { padding: 0 2px 0 1px; }
.deg { width: 5px; }
.box { appearance: none; flex: none; display: block; width: 14px; height: 14px; background: #fff; border: 1px solid #777; border-radius: 3px; }

/* workspace */
.work { flex: 1; min-height: 0; display: flex; }
.strip { flex: none; height: 12px; display: flex; justify-content: flex-end; align-items: center; padding-right: 4px; background: #d3d4d9; border-bottom: 1px solid #bfc0c8; }
.x { color: #666; }
.scroller { display: flex; justify-content: space-between; overflow: hidden; min-height: 0; background: #fff; }
.track { flex: none; width: 11px; }
.thumb { width: 8px; background: #cdcdcd; border-radius: 4px; }

.nav { flex: none; width: 191px; display: flex; flex-direction: column; border-right: 1px solid #b5b6bd; background: #eee; }
.nav-title { flex: none; height: 22px; line-height: 22px; margin-left: -12px; color: #7a7a7a; font-weight: 500; border-bottom: 1px solid #c3c3ca; }
.nav-tools { flex: none; height: 28px; display: flex; justify-content: flex-end; gap: 4px; padding: 3px 1px; border-bottom: 1px solid #c3c3ca; }
.nav-tools button { width: 24px; height: 22px; display: grid; place-items: center; background: #e6f3ff; border: 1px solid #5aa7ee; border-radius: 3px; }
.nav .scroller { flex: 1; }
.nav-list { display: flex; flex-direction: column; padding: 3px 0 0 3px; }
.nav-list li { flex: none; height: 24px; display: flex; align-items: center; white-space: nowrap; }
.nav-list .sub { width: 140px; height: 20px; margin: 2px 0 2px 17px; padding-left: 3px; gap: 6px; }
.nav-list .sel { background: #c8daf2; }
.vip { width: 30px; height: 10px; margin-left: 5px; background: #ffd45e; color: #b48a10; font: bold 8px/10px "Liberation Serif", serif; text-align: center; }
.nav-track { padding-top: 16px; }
.nav-track .thumb { height: 818px; }

.middle { flex: none; position: relative; width: 391px; padding: 0 4px; display: flex; flex-direction: column; gap: 4px; }
.panel { display: flex; flex-direction: column; background: #eee; border: 1px solid #c3c3ca; border-top: 0; }
.comps { flex: none; }
.props { flex: 1; min-height: 0; padding-bottom: 3px; border-bottom: 0; }
.tabs { flex: none; display: flex; height: 23px; border-bottom: 1px solid #c3c3ca; }
.tab { padding: 0 8px; border-right: 1px solid #c3c3ca; font-weight: bold; color: #888; background: #e0e0e0; }
.tab.on { color: #333; background: #eee; }
.bar { display: flex; align-items: center; height: 28px; padding: 0 2px 0 5px; gap: 9px; border-bottom: 1px solid #c3c3ca; color: #333; }
.more { margin-left: auto; }
.search { display: flex; align-items: center; height: 19px; padding: 0 7px 0 2px; background: #fff; border-bottom: 1px solid #b0b0b4; }
.search input { flex: 1; height: 18px; min-width: 0; }
.search input::placeholder { color: #777; opacity: 1; }
.tree-box { height: 168px; }
.tree { padding: 3px 0 0 9px; }
.tree li { height: 24px; display: flex; align-items: center; gap: 6px; }
.tree .l2 { padding-left: 20px; }
.tree .l3 { padding-left: 51px; }
.tree span { padding: 0 3px; width: 34px; }
.tree .sel { background: #b3cdf0; }
.tree-track { padding-top: 16px; }
.tree-track .thumb { height: 103px; }

.grid-box { flex: 1; border-bottom: 1px solid #c3c3ca; }
.grid { table-layout: fixed; border-collapse: separate; border-spacing: 0; align-self: flex-start; }
.props .grid { width: 366px; }
.grid th, .grid td { height: 21px; padding: 0 3px; border: solid #d6d6da; border-width: 0 1px 1px 0; text-align: left; font-weight: 400; white-space: nowrap; overflow: hidden; line-height: 20px; }
.grid th { background: #efefef; text-align: center; color: #333; padding: 0; border-color: #c3c3ca; }
.grid th.hot { background: #81b9f9; color: #fff; font-weight: bold; border-color: #5ba0ea; }
.c-num { width: 22px; } .c-name { width: 101px; } .c-val { width: 202px; } .c-add { width: 41px; }
.grid .box { margin: 0 auto; }
.props td:nth-child(4) { padding: 0 0 1px; }
.grid .blue { color: #1a5cf0; }
.grid .deep { color: #0000e0; }
.grid .gray { color: #808080; }
.grid .off { background: #eaeaea; color: #8a8a8a; }
.grid .child {
  padding-left: 31px;
  background-image: linear-gradient(#dcdcdc, #dcdcdc), linear-gradient(#dcdcdc, #dcdcdc);
  background-size: 1px 100%, 16px 1px;
  background-position: 8px 0, 8px 9px;
  background-repeat: no-repeat;
}
.grid .last { background-size: 1px 10px, 16px 1px; }
.fold { display: inline-block; position: relative; vertical-align: middle; width: 13px; height: 13px; margin: 0 5px 2px 0; background: #fff; border: 1px solid #777; border-radius: 2px; }
.fold::after { content: ""; position: absolute; left: 3px; right: 3px; top: 5px; height: 1px; background: #333; }
.grid td.edit { padding: 0; border-right: 0; border-bottom: 0; }
.edit div { display: flex; align-items: center; justify-content: space-between; height: 21px; padding: 0 3px 0 4px; background: #fff; border: 2px solid #5ba0ea; }
.dots { width: 16px; height: 12px; display: grid; place-items: center; background: #e6f3ff; border: 1px solid #6aaef0; border-radius: 2px; }
.dots i { width: 10px; height: 2px; background: repeating-linear-gradient(90deg, #4a7fb5 0 2px, transparent 2px 4px); }
.grid-track { padding-top: 97px; }
.grid-track .thumb { height: 400px; }
.splitter { position: absolute; right: 0; top: 429px; width: 4px; height: 100px; background: #5c6672; }
.splitter::after { content: ""; position: absolute; left: 0; top: 47px; border: 3px solid transparent; border-right-color: #c8ccd0; border-left: 0; }

/* drawing area */
.canvas { flex: 1; min-width: 0; position: relative; overflow: hidden; background: #000; }
.drawing { position: absolute; inset: 0; }
.cad { fill: #fff; font: 18px "Noto Sans CJK SC", sans-serif; }
.axis-name { font: 14px "Liberation Sans", sans-serif; text-anchor: middle; }
.axis-name.x { fill: #f00000; }
.axis-name.y { fill: #00f000; }

.dialog { position: absolute; left: 100px; top: 190px; width: 577px; background: #f0f0f0; border: 1px solid #c3c9d2; border-top: 0; }
.dlg-head { display: flex; align-items: center; justify-content: space-between; height: 27px; margin: 0 -1px; padding: 0 10px 0 9px; background: #2d80e2; color: #fff; }
.dlg-head h1 { font-weight: 400; }
.dlg-head .x { color: #fff; }
.dlg-body { padding: 11px 11px 11px; }
.dlg-box { height: 346px; border: 1px solid #c3c3ca; }
.dialog .grid { width: 519px; }
.d-num { width: 22px; } .d-name { width: 376px; } .d-val { width: 121px; }
.dialog .grid td:nth-child(2) { background-color: #ffffce; }
.dialog .fold { width: 11px; height: 11px; margin-right: 7px; }
.dialog .fold::after { left: 2px; right: 2px; top: 4px; }
.picked { width: 47px; height: 16px; background: #3390ff; color: #fff; border-right: 1px solid #222; }
.dlg-track { padding-top: 14px; }
.dlg-track .thumb { height: 110px; }
.hint { margin-top: 6px; line-height: 17px; }
.actions { display: flex; justify-content: flex-end; gap: 6px; margin-top: 6px; }
.actions button { width: 80px; height: 26px; border-radius: 3px; }
.ok { background: #2d80e2; color: #fff; }
.actions .cancel { background: #fff; border: 1px solid #c8c8c8; }
.grip { position: absolute; right: 3px; bottom: 2px; }
.marks { position: absolute; inset: 0; pointer-events: none; }
```
